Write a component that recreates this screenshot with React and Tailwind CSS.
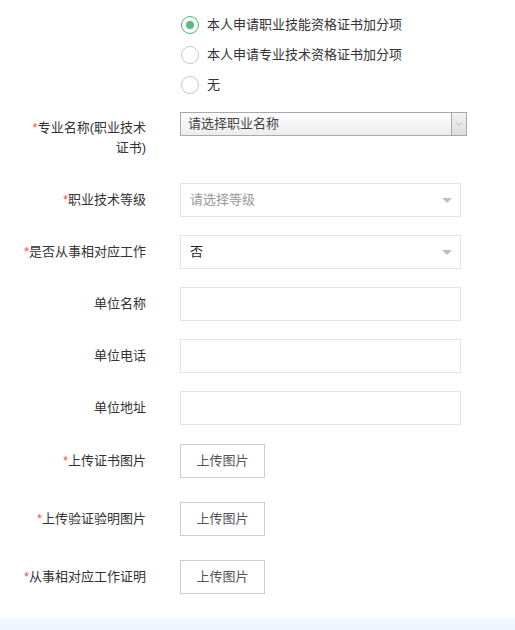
import { ChevronDown } from 'lucide-react';

const radios = [
  { label: '本人申请职业技能资格证书加分项', checked: true },
  { label: '本人申请专业技术资格证书加分项', checked: false },
  { label: '无', checked: false },
];

function Label({ children, required }) {
  return (
    <div className="w-[146px] shrink-0 text-right text-[13px] leading-[20px] text-[#333]">
      {required && <span className="text-[#ff4d4f]">*</span>}
      {children}
    </div>
  );
}

function Caret() {
  return (
    <span className="h-0 w-0 border-l-[5px] border-r-[5px] border-t-[5px] border-l-transparent border-r-transparent border-t-[#bfbfbf]" />
  );
}

function SelectBox({ value, placeholder }) {
  return (
    <div className="flex h-[34px] w-[281px] items-center justify-between border border-[#e3e3e3] bg-white pl-[9px] pr-[8px] text-[13px]">
      <span className={placeholder ? 'text-[#999]' : 'text-[#222]'}>{value}</span>
      <Caret />
    </div>
  );
}

function TextBox() {
  return <div className="h-[34px] w-[281px] border border-[#e3e3e3] bg-white" />;
}

function UploadButton() {
  return (
    <button className="flex h-[34px] w-[85px] items-center justify-center border border-[#cccccc] bg-white text-[13px] text-[#555]">
      上传图片
    </button>
  );
}

export default function App() {
  return (
    <div className="flex h-[630px] w-[515px] flex-col overflow-hidden bg-white font-['Liberation_Sans','Noto_Sans_CJK_SC',sans-serif]">
      {/* radio group */}
      <div className="flex flex-col pl-[181px] pt-[10px]">
        {radios.map((r) => (
          <div key={r.label} className="flex h-[30px] items-center gap-[8px]">
            <span
              className={
                'flex h-[18px] w-[18px] items-center justify-center rounded-full border bg-white ' +
                (r.checked ? 'border-[#4fb47a]' : 'border-[#c8c8c8]')
              }
            >
              {r.checked && <span className="h-[8px] w-[8px] rounded-full bg-[#5cb87e]" />}
            </span>
            <span className="text-[13px] text-[#333]">{r.label}</span>
          </div>
        ))}
      </div>

      {/* professional name */}
      <div className="mt-[12px] flex gap-[34px]">
        <div className="pt-[6px]">
          <Label required>
            专业名称(职业技术
            <br />
            证书)
          </Label>
        </div>
        <div className="flex h-[24px] w-[287px] border border-[#a9a9a9] bg-gradient-to-b from-white to-[#ececec]">
          <span className="flex flex-1 items-center pl-[7px] text-[13px] text-[#444]">请选择职业名称</span>
          <span className="flex w-[15px] items-center justify-center border-l border-[#a9a9a9] bg-gradient-to-b from-[#f2f2f2] to-[#dcdcdc]">
            <ChevronDown size={10} strokeWidth={1.5} className="text-[#999]" />
          </span>
        </div>
      </div>

      <div className="mt-[25px] flex flex-col gap-[18px]">
        <div className="flex items-center gap-[34px]">
          <Label required>职业技术等级</Label>
          <SelectBox value="请选择等级" placeholder />
        </div>
        <div className="flex items-center gap-[34px]">
          <Label required>是否从事相对应工作</Label>
          <SelectBox value="否" />
        </div>
        <div className="flex items-center gap-[34px]">
          <Label>单位名称</Label>
          <TextBox />
        </div>
        <div className="flex items-center gap-[34px]">
          <Label>单位电话</Label>
          <TextBox />
        </div>
        <div className="flex items-center gap-[34px]">
          <Label>单位地址</Label>
          <TextBox />
        </div>
      </div>

      <div className="mt-[19px] flex flex-col gap-[24px]">
        <div className="flex items-center gap-[34px]">
          <Label required>上传证书图片</Label>
          <UploadButton />
        </div>
        <div className="flex items-center gap-[34px]">
          <Label required>上传验证验明图片</Label>
          <UploadButton />
        </div>
        <div className="flex items-center gap-[34px]">
          <Label required>从事相对应工作证明</Label>
          <UploadButton />
        </div>
      </div>

      <div className="mt-[24px] h-[12px] w-full shrink-0 bg-gradient-to-b from-[#f3f8fd] to-[#ebf3fc]" />
    </div>
  );
}
